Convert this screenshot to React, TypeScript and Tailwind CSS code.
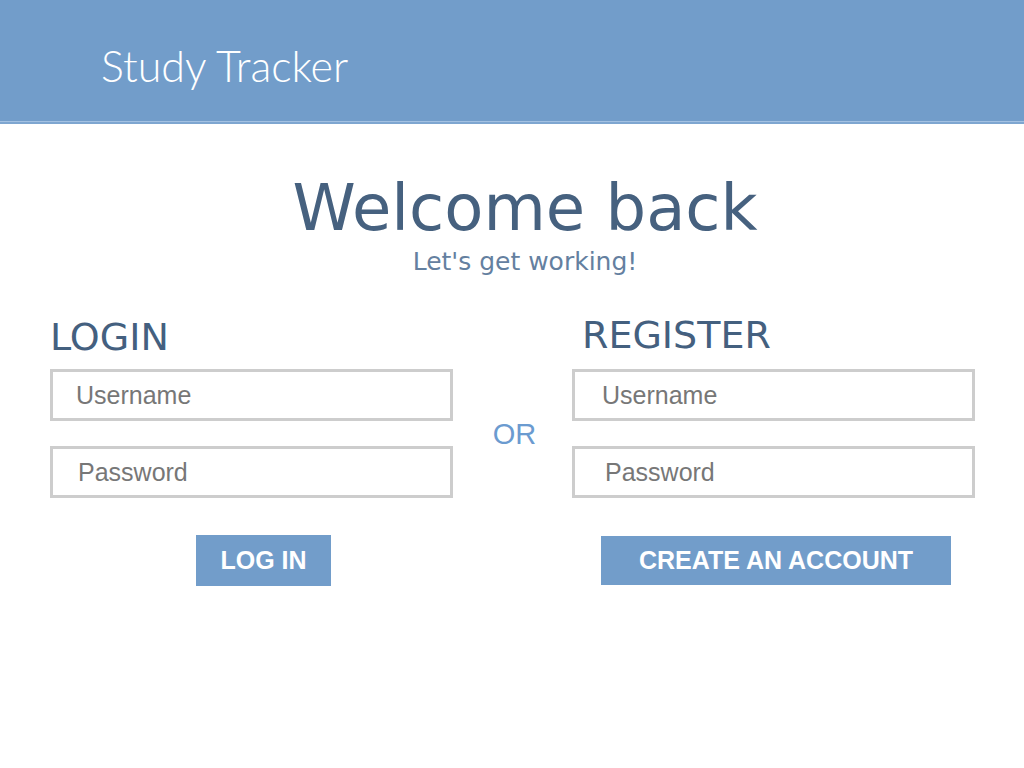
import React from "react";

const dv = "font-['DejaVu_Sans',Verdana,sans-serif]";
const ar = "font-['Liberation_Sans',Arial,sans-serif]";

function Field({ placeholder, pad }: { placeholder: string; pad: string }) {
  return (
    <input
      type={placeholder === "Password" ? "password" : "text"}
      placeholder={placeholder}
      className={`block h-[52px] w-full border-[3px] border-[#cdcdcd] bg-white ${pad} text-[25px] text-[#555] ${ar} outline-none placeholder:text-[#777777]`}
    />
  );
}

export default function App() {
  return (
    <div className="min-h-[768px] w-full bg-white">
      <header className="flex flex-col">
        <div className="h-[121px] bg-[#729dca] pl-[101px] pt-[44px]">
          <div className="font-['Lato',sans-serif] text-[43px] font-light leading-none text-white">
            Study Tracker
          </div>
        </div>
        <div className="h-[1px] bg-[#a3c1e2]" />
        <div className="h-[2px] bg-[#7ea6d0]" />
      </header>

      <main className="flex flex-col">
        <h1 className={`mt-[52px] pl-[26px] text-center text-[64px] leading-none text-[#46617f] ${dv}`}>
          Welcome back
        </h1>
        <p className={`mt-[9px] pl-[26px] text-center text-[25px] leading-none text-[#6480a0] ${dv}`}>
          Let's get working!
        </p>

        <section className="mt-[41px] flex pl-[50px]">
          <div className="flex w-[403px] flex-col">
            <h2 className={`pt-[3px] text-[38px] leading-none text-[#44607f] ${dv}`}>LOGIN</h2>
            <div className="mt-[13px]">
              <Field placeholder="Username" pad="pl-[23px]" />
            </div>
            <div className="mt-[25px]">
              <Field placeholder="Password" pad="pl-[25px]" />
            </div>
            <button
              className={`ml-[146px] mt-[37px] h-[51px] w-[135px] bg-[#729dca] text-[25px] font-bold text-white ${ar}`}
            >
              LOG IN
            </button>
          </div>

          <div className="flex w-[119px] justify-center pl-[4px] pt-[105px]">
            <span className={`text-[29px] leading-none text-[#6b9bd0] ${ar}`}>OR</span>
          </div>

          <div className="flex w-[403px] flex-col">
            <h2 className={`pl-[10px] pt-[1px] text-[38px] leading-none text-[#44607f] ${dv}`}>REGISTER</h2>
            <div className="mt-[15px]">
              <Field placeholder="Username" pad="pl-[27px]" />
            </div>
            <div className="mt-[25px]">
              <Field placeholder="Password" pad="pl-[30px]" />
            </div>
            <button
              className={`ml-[29px] mt-[38px] h-[49px] w-[350px] bg-[#729dca] text-[25px] font-bold text-white ${ar}`}
            >
              CREATE AN ACCOUNT
            </button>
          </div>
        </section>
      </main>
    </div>
  );
}
